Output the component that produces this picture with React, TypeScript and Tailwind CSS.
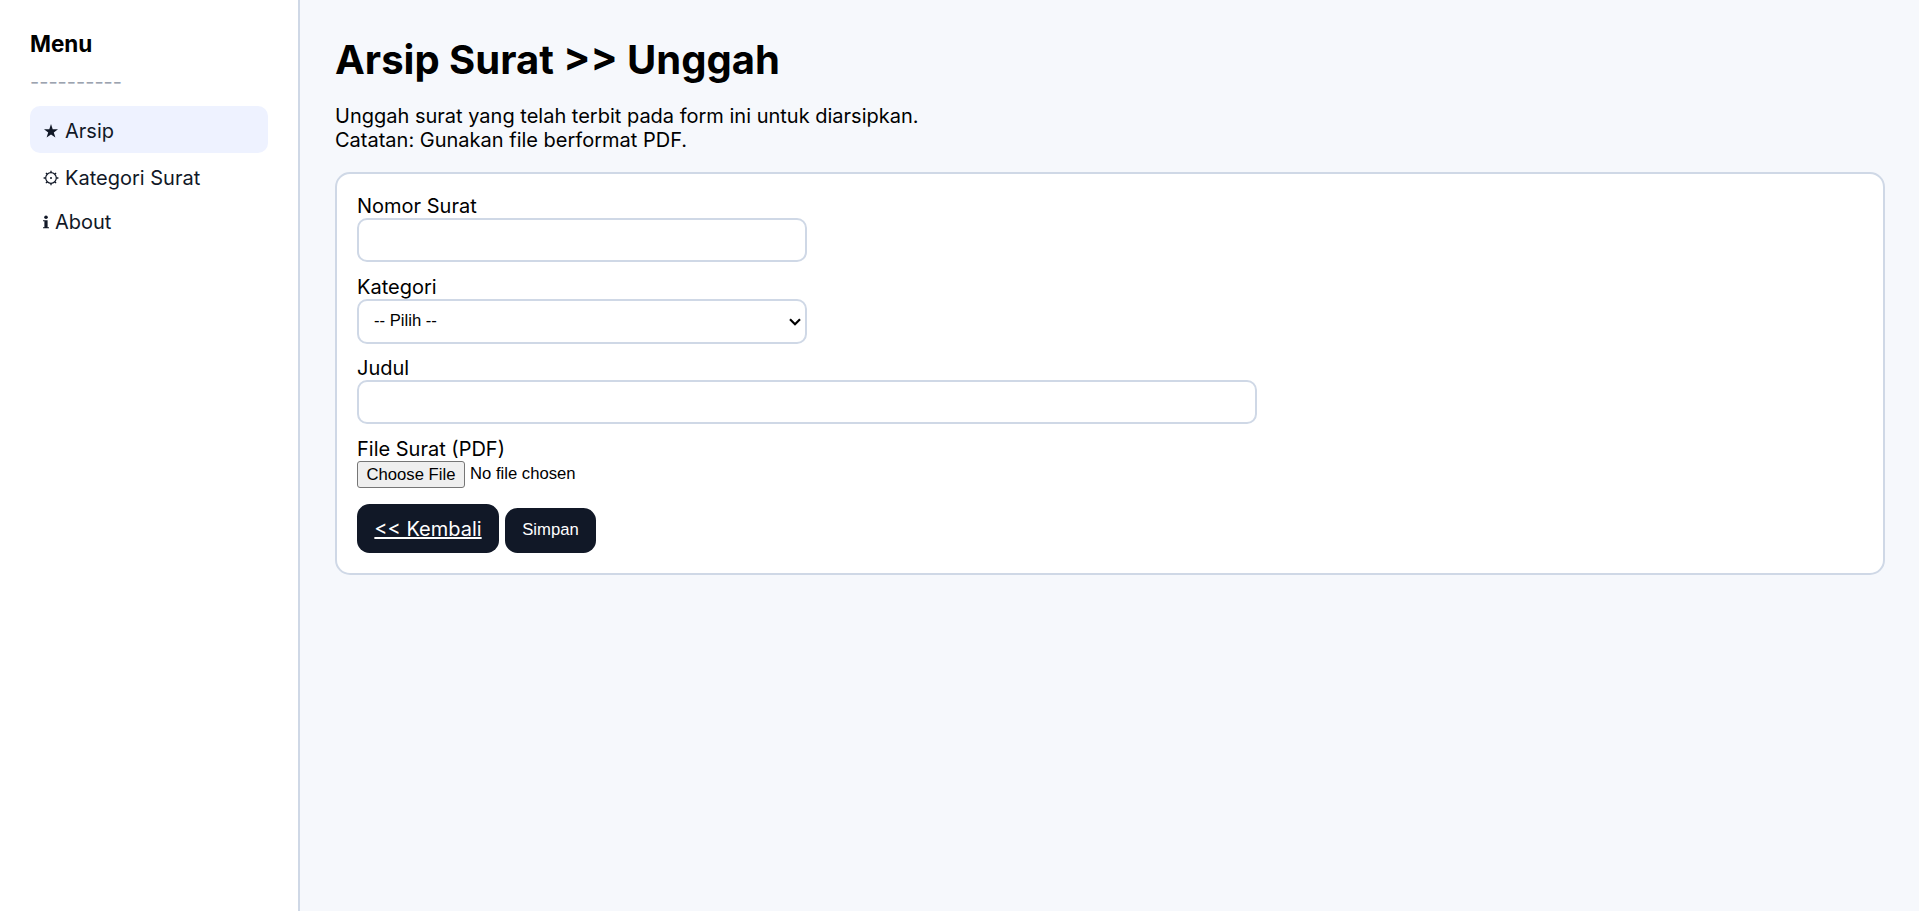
import type { ReactNode } from 'react';

function StarIcon() {
  return (
    <svg viewBox="0 0 14 14" className="h-[14px] w-[14px]" fill="currentColor">
      <path d="M7 0 8.7 5.2H14L9.8 8.5 11.4 13.6 7 10.4 2.6 13.6 4.2 8.5 0 5.2h5.3z" />
    </svg>
  );
}

function GearIcon() {
  return (
    <svg viewBox="0 0 16 16" className="h-4 w-4" fill="none" stroke="currentColor">
      <circle cx="8" cy="8" r="5.3" strokeWidth="1.2" />
      <circle cx="8" cy="8" r="1" fill="currentColor" stroke="none" />
      <path
        strokeWidth="1.3"
        d="M8 .8v2M8 13.2v2M.6 8h2M13.4 8h2M2.9 2.9l1.4 1.4M11.7 11.7l1.4 1.4M2.9 13.1l1.4-1.4M11.7 4.3l1.4-1.4"
      />
    </svg>
  );
}

function InfoIcon() {
  return (
    <svg viewBox="0 0 6 14" className="h-[14px] w-[6px]" fill="currentColor">
      <circle cx="3" cy="2.2" r="1.8" />
      <path d="M0 5.2h4.6v7H6v1.1H0v-1.1h1.4V6.3H0z" />
    </svg>
  );
}

function MenuItem({ icon, label, className }: { icon: ReactNode; label: string; className: string }) {
  return (
    <a className={`flex items-center rounded-[10px] pt-[2px] text-[#111827] ${className}`}>
      {icon}
      <span>{label}</span>
    </a>
  );
}

const field = 'rounded-[10px] border-2 border-[#cfd8e6] bg-white';

export default function App() {
  return (
    <div className="flex h-[911px] bg-[#f6f8fc] font-['Inter',sans-serif] text-[20px] leading-6 text-black">
      <aside className="w-[300px] shrink-0 border-r-2 border-[#cfd8e6] bg-white px-[30px] pt-[30px]">
        <h2 className="h-7 text-[22.5px] leading-7 font-bold">Menu</h2>
        <div className="mt-3 h-6 text-[#9ca3af]">----------</div>
        <nav className="mt-3 flex flex-col">
          <MenuItem icon={<StarIcon />} label="Arsip" className="h-[47px] gap-[7px] bg-[#eef2ff] pl-[14px]" />
          <MenuItem icon={<GearIcon />} label="Kategori Surat" className="h-[47px] gap-[6px] pl-[13px]" />
          <MenuItem icon={<InfoIcon />} label="About" className="h-[42px] gap-[6px] pl-[13px]" />
        </nav>
      </aside>
      <main className="grow pt-9 pr-[34px] pl-[35px]">
        <h1 className="h-12 text-[40px] leading-[48px] font-bold">Arsip Surat &gt;&gt; Unggah</h1>
        <p className="mt-5">
          Unggah surat yang telah terbit pada form ini untuk diarsipkan.
          <br />
          Catatan: Gunakan file berformat PDF.
        </p>
        <form className="mt-5 h-[403px] rounded-[15px] border-2 border-[#cfd8e6] bg-white p-5">
          <label className="block">Nomor Surat</label>
          <input className={`${field} block h-11 w-[450px]`} />
          <label className="mt-[13px] block">Kategori</label>
          <div
            className={`${field} flex h-[45px] w-[450px] items-center justify-between pr-[4px] pl-[15px] font-['Liberation_Sans',Arial,sans-serif] text-[16.667px]`}
          >
            <span className="pb-px">-- Pilih --</span>
            <svg viewBox="0 0 12 8" className="h-2 w-3" fill="none" stroke="currentColor" strokeWidth="2.2">
              <path d="M1 1.2l5 5 5-5" />
            </svg>
          </div>
          <label className="mt-3 block">Judul</label>
          <input className={`${field} block h-11 w-[900px]`} />
          <label className="mt-[13px] block">File Surat (PDF)</label>
          <div className="flex h-[27px] items-center gap-[5px] font-['Liberation_Sans',Arial,sans-serif] text-[16.667px]">
            <button
              type="button"
              className="h-[27px] w-[108px] rounded-[3px] border border-[#767676] bg-[#efefef] leading-[25px]"
            >
              Choose File
            </button>
            <span className="pb-[2px]">No file chosen</span>
          </div>
          <div className="mt-4 flex items-end gap-[6px]">
            <a className="flex h-[49px] w-[142px] items-center justify-center rounded-[12.5px] bg-[#111827] text-white underline">
              &lt;&lt; Kembali
            </a>
            <button
              type="button"
              className="h-[45px] w-[91px] rounded-[12.5px] bg-[#111827] pb-[2px] font-['Liberation_Sans',Arial,sans-serif] text-[16.667px] text-white"
            >
              Simpan
            </button>
          </div>
        </form>
      </main>
    </div>
  );
}
